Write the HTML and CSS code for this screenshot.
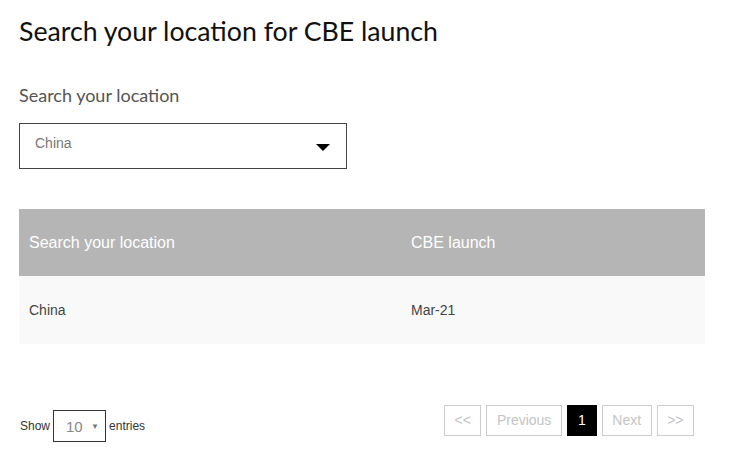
FILE: index.html
```html
<!DOCTYPE html>
<html lang="en">
<head>
    <meta charset="UTF-8">
    <title>Search your location for CBE launch</title>
    <link rel="stylesheet" href="styles.css">
</head>
<body>
    <div class="page">
        <h1>Search your location for CBE launch</h1>
        <label class="search-label" for="location">Search your location</label>
        <div class="location-select">
            <span class="location-value">China</span>
            <span class="caret"></span>
        </div>

        <table class="launch-table">
            <thead>
                <tr>
                    <th class="col-location">Search your location</th>
                    <th>CBE launch</th>
                </tr>
            </thead>
            <tbody>
                <tr>
                    <td>China</td>
                    <td>Mar-21</td>
                </tr>
            </tbody>
        </table>

        <div class="table-footer">
            <div class="length">
                <span>Show</span>
                <div class="length-select">
                    <span>10</span>
                    <span class="small-caret">&#9660;</span>
                </div>
                <span>entries</span>
            </div>
            <div class="pager">
                <span class="page-btn">&lt;&lt;</span>
                <span class="page-btn">Previous</span>
                <span class="page-btn current">1</span>
                <span class="page-btn">Next</span>
                <span class="page-btn">&gt;&gt;</span>
            </div>
        </div>
    </div>
</body>
</html>
```

FILE: styles.css
```css
body {
    margin: 0;
    font-family: "Liberation Sans", Arial, sans-serif;
    background-color: #fff;
    color: #222;
}
.page {
    padding: 15px 43px 0 19px;
}
h1 {
    margin: 0;
    font-family: Lato, "Noto Sans", sans-serif;
    font-weight: 400;
    font-size: 26.7px;
    line-height: 32px;
    color: #111;
}
.search-label {
    display: block;
    margin-top: 37px;
    font-family: Lato, "Noto Sans", sans-serif;
    font-size: 18px;
    line-height: 22px;
    color: #555;
}
.location-select {
    display: flex;
    align-items: center;
    justify-content: space-between;
    box-sizing: border-box;
    width: 328px;
    height: 46px;
    margin-top: 17px;
    padding: 0 16px 0 15px;
    border: 1px solid #444;
}
.location-value {
    font-size: 14px;
    color: #777;
    margin-top: -6px;
}
.caret {
    width: 0;
    height: 0;
    border-left: 7px solid transparent;
    border-right: 7px solid transparent;
    border-top: 7px solid #000;
    margin-top: 2px;
}
.launch-table {
    width: 686px;
    margin-top: 40px;
    border-collapse: collapse;
}
.launch-table th {
    height: 67px;
    padding: 0 10px;
    background-color: #b5b5b5;
    color: #fff;
    font-size: 16px;
    font-weight: 400;
    text-align: left;
}
.launch-table .col-location {
    width: 362px;
}
.launch-table td {
    height: 68px;
    padding: 0 10px;
    background-color: #f9f9f9;
    color: #444;
    font-size: 14px;
}
.table-footer {
    display: flex;
    justify-content: space-between;
    align-items: flex-start;
    margin-top: 61px;
    padding-right: 11px;
}
.length {
    display: flex;
    align-items: center;
    gap: 3px;
    margin-top: 5px;
    margin-left: 1px;
    font-size: 12px;
    color: #333;
}
.length-select {
    display: flex;
    align-items: center;
    justify-content: space-between;
    box-sizing: border-box;
    width: 53px;
    height: 32px;
    padding: 0 6px 0 12px;
    border: 1px solid #333;
    font-size: 15px;
    color: #888;
}
.small-caret {
    font-size: 8px;
    color: #777;
}
.pager {
    display: flex;
    gap: 5px;
}
.page-btn {
    box-sizing: border-box;
    height: 31px;
    padding: 0 9.5px;
    border: 1px solid #ccc;
    font-size: 14px;
    line-height: 29px;
    color: #c4c4c4;
}
.page-btn.current {
    width: 30px;
    padding: 0;
    text-align: center;
    background-color: #000;
    border-color: #000;
    color: #fff;
}
```
